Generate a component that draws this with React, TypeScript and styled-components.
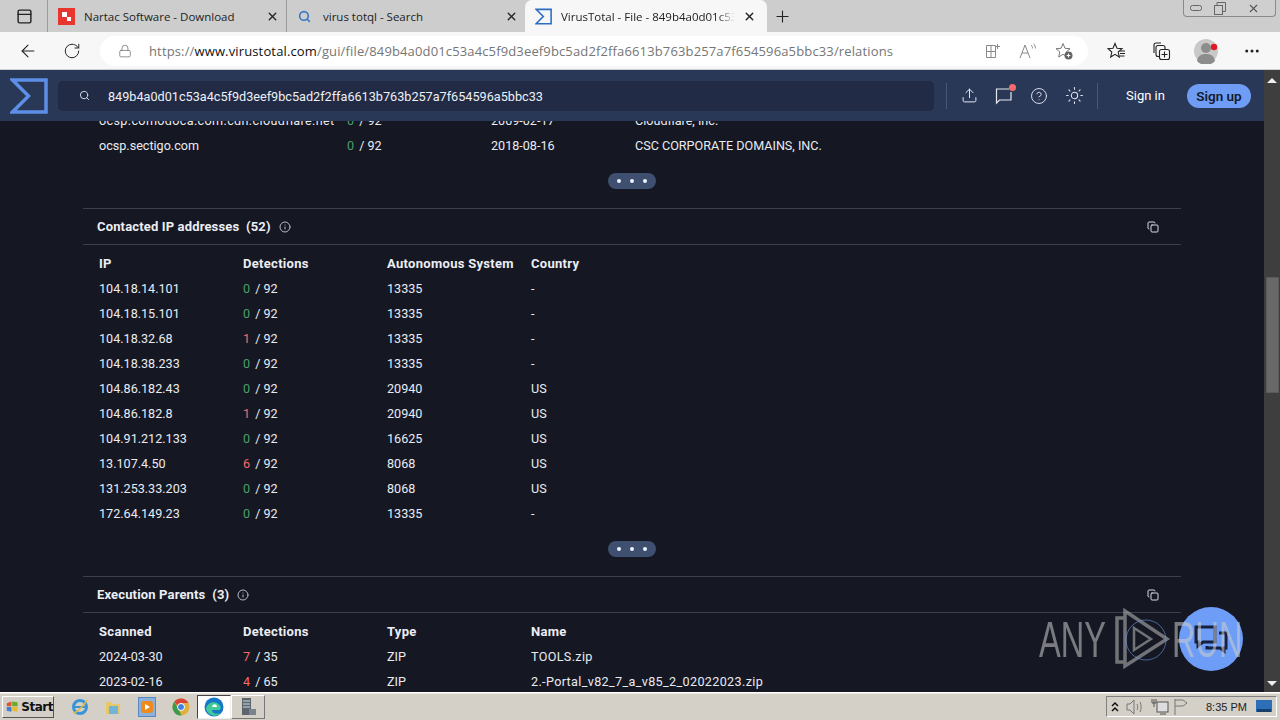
import React from "react";
import styled, { createGlobalStyle } from "styled-components";
import {
  ArrowLeft, RotateCw, Lock, X, Plus, Search, MoreHorizontal, Upload, HelpCircle, Sun, Info, Copy,
  PanelTop,
} from "lucide-react";

const Global = createGlobalStyle`
  html, body { margin: 0; padding: 0; width: 1280px; height: 720px; overflow: hidden; }
  * { box-sizing: border-box; }
  body { font-family: Roboto, "Noto Sans", sans-serif; background: #151823; }
`;

const Frame = styled.div`
  position: relative; width: 1280px; height: 720px; display: flex; flex-direction: column; overflow: hidden;
`;

/* browser chrome */
const TabBar = styled.div`
  height: 32px; flex: none; display: flex; align-items: stretch; background: #cdcdcd; color: #222;
`;
const WindowIcon = styled.div`
  width: 47px; display: flex; align-items: center; justify-content: center; padding-left: 1px; color: #222;
`;
const Tab = styled.div<{ $active?: boolean; $width: number }>`
  width: ${(p) => p.$width}px; display: flex; align-items: center; padding: 0 ${(p) => (p.$active ? 11 : 7)}px 0 10px;
  font: 11.5px "Open Sans", sans-serif; white-space: nowrap;
  background: ${(p) => (p.$active ? "#f7f7f7" : "transparent")};
  border-radius: ${(p) => (p.$active ? "7px 7px 0 0" : "0")};
  border-left: ${(p) => (p.$active ? "0" : "1px solid #9b9b9b")};
`;
const TabIcon = styled.span<{ $w: number }>`
  width: ${(p) => p.$w}px; flex: none; display: flex; align-items: center;
`;
const TabTitle = styled.span<{ $fade?: boolean }>`
  flex: 1; overflow: hidden; min-width: 0;
  ${(p) => p.$fade && "mask-image: linear-gradient(to right, #000 90%, transparent);"}
`;
const NewTab = styled.div`
  width: 30px; display: flex; align-items: center; justify-content: center; color: #222;
`;
const WindowButtons = styled.div`
  margin-left: auto; margin-right: 4px; width: 93px; height: 17px; display: flex;
  border: 1px solid #8a8a8a; border-top: 0; border-radius: 0 0 4px 4px; background: #cfcfcf; color: #555;
`;
const WinBtn = styled.div<{ $w: number }>`
  width: ${(p) => p.$w}px; display: flex; align-items: center; justify-content: center;
`;
const AddressRow = styled.div`
  height: 38px; flex: none; display: flex; align-items: center; background: #f7f7f7;
  border-bottom: 1px solid #d0d0d0; color: #222;
`;
const NavBtn = styled.div<{ $w: number }>`
  width: ${(p) => p.$w}px; flex: none; display: flex; align-items: center; justify-content: center;
`;
const Omnibox = styled.div`
  width: 988px; height: 30px; flex: none; background: #fff; border-radius: 15px; display: flex; align-items: center;
  padding-left: 18px; margin-left: 12px; color: #666;
`;
const Url = styled.div`
  width: 826px; margin-left: 17px; font: 13px "Open Sans", sans-serif; color: #767676; white-space: nowrap; overflow: hidden;
  letter-spacing: 0.14px;
  b { font-weight: 400; color: #111; }
`;
const OmniIcons = styled.div`
  display: flex; align-items: center; gap: 18px; color: #777; margin-left: 10px;
`;
const ToolIcons = styled.div`
  display: flex; align-items: center; margin-left: 11px;
`;
const Avatar = styled.div`
  display: flex;
`;

/* page */
const Body = styled.div`
  flex: 1; min-height: 0; display: flex;
`;
const Page = styled.div`
  flex: 1; min-width: 0; display: flex; flex-direction: column; background: #151823;
`;
const Header = styled.header`
  height: 51px; flex: none; display: flex; align-items: center; background: #2a3857; z-index: 2;
  color: #e6e9f2; padding-left: 10px;
`;
const SearchBox = styled.div`
  width: 876px; height: 30px; margin-left: 10px; border-radius: 5px; background: #212b45; display: flex; align-items: center;
  padding-left: 21px; color: #dfe3ee;
`;
const SearchText = styled.span`
  margin-left: 18px; padding-top: 1px; font-size: 12.67px; color: #eef0f6;
`;
const Divider = styled.div`
  width: 1px; height: 26px; background: #4a5878;
`;
const HeadIcons = styled.div`
  display: flex; align-items: center; gap: 15px; margin: 0 13px 0 12px;
`;
const HeadIcon = styled.span`
  position: relative; width: 20px; height: 20px; display: flex; align-items: center; justify-content: center;
`;
const RedDot = styled.span`
  position: absolute; top: -2px; right: -2px; width: 7px; height: 7px; border-radius: 50%; background: #f56a6a;
`;
const SignIn = styled.span`
  margin-left: 28px; font-size: 13px; color: #fff;
`;
const SignUp = styled.span`
  margin-left: 22px; width: 64px; height: 24px; border-radius: 12px; background: #6f9df5; color: #141a2c;
  display: flex; align-items: center; justify-content: center; font-size: 13.5px; font-weight: 600;
`;
const Viewport = styled.main`
  flex: 1; min-height: 0; overflow: hidden;
`;
const Scrolled = styled.div`
  margin-top: -13px; padding: 0 83px; width: 1264px; color: #e9ebf2;
`;
const Row = styled.div`
  display: grid; grid-template-columns: repeat(4, 144px); height: 25px; align-items: center; padding-left: 16px;
  font-size: 12.6px; white-space: nowrap;
`;
const WideRow = styled(Row)`
  grid-template-columns: 248px 144px 144px auto;
`;
const HeadRow = styled(Row)`
  font-size: 13px; font-weight: 700; letter-spacing: 0.3px; color: #eceef4;
`;
const LongName = styled.span`
  letter-spacing: 0.35px;
`;
const Num = styled.span<{ $bad: boolean }>`
  color: ${(p) => (p.$bad ? "#f56a6a" : "#4c9e68")};
`;
const Slash = styled.span`
  margin-left: 2px;
`;
const MoreWrap = styled.div`
  height: 50px; padding-top: 15px; display: flex; justify-content: center;
`;
const MorePill = styled.div`
  width: 48px; height: 16px; border-radius: 8px; background: #3f4f70; display: flex; align-items: center; justify-content: center; gap: 9px;
`;
const MoreDot = styled.span`
  width: 4px; height: 4px; border-radius: 50%; background: #eef2ff;
`;
const SectionHead = styled.div`
  height: 37px; border-top: 1px solid #3b3f4b; border-bottom: 1px solid #3b3f4b; display: flex; align-items: center;
  padding: 0 22px 0 14px; font-size: 13px; font-weight: 700; letter-spacing: 0.15px; color: #eceef4; white-space: pre;
`;
const SectionInfo = styled.span`
  display: flex; margin-left: 8px; color: #b8bcc8;
`;
const SectionCopy = styled.span`
  display: flex; margin-left: auto; color: #d8dbe4;
`;
const TableTop = styled.div`
  height: 6px;
`;

const Scrollbar = styled.div`
  width: 16px; flex: none; background: #3e3e3e; display: flex; flex-direction: column; align-items: center;
`;
const ScrollArrow = styled.div<{ $down?: boolean }>`
  width: 0; height: 0; flex: none; border-left: 5px solid transparent; border-right: 5px solid transparent;
  ${(p) => (p.$down ? "border-top: 5px solid #eee; margin-bottom: 6px;" : "border-bottom: 5px solid #eee; margin-top: 8px;")}
`;
const Thumb = styled.div`
  width: 13px; height: 116px; margin-top: 194px; background: #686868; border: 1px solid #5a5a5a; flex: none;
`;
const ScrollGap = styled.div`
  flex: 1;
`;

/* taskbar */
const Taskbar = styled.footer`
  height: 28px; flex: none; background: #d4d0c8; border-top: 1px solid #fff; display: flex; align-items: center; padding-left: 2px;
  box-shadow: inset 0 1px 0 #ece9e2;
`;
const StartBtn = styled.div`
  width: 52px; height: 22px; display: flex; align-items: center; gap: 3px; padding-left: 3px;
  font: bold 12px "DejaVu Sans", sans-serif; letter-spacing: -0.5px; color: #111; background: #d4d0c8;
  border: 1px solid; border-color: #fff #555 #555 #fff;
`;
const TaskIcons = styled.div`
  display: flex; align-items: center; margin-left: 9px;
`;
const TaskItem = styled.div<{ $state?: "active" | "raised" }>`
  width: 33.6px; height: 24px; flex: none; display: flex; align-items: center; justify-content: center;
  ${(p) => p.$state === "active" && "background: #fff; border: 1px solid; border-color: #444 #eee #eee #444;"}
  ${(p) => p.$state === "raised" && "border: 1px solid; border-color: #fff #777 #777 #fff;"}
`;
const Tray = styled.div`
  margin-left: auto; margin-right: 3px; width: 171px; height: 21px; display: flex; align-items: center; padding-left: 2px;
  border: 1px solid; border-color: #808080 #fff #fff #808080; color: #333;
`;
const TrayItem = styled.span<{ $w: number }>`
  width: ${(p) => p.$w}px; flex: none; display: flex; align-items: center; justify-content: center;
`;
const Clock = styled.span`
  margin-left: 15px; width: 50px; font: 11px "Liberation Sans", sans-serif; color: #222; white-space: nowrap;
`;

/* overlays */
const ChatBubble = styled.div`
  position: absolute; left: 1179px; top: 607px; width: 64px; height: 64px; border-radius: 50%; background: #6d9df6;
  display: flex; align-items: center; justify-content: center;
`;
const Watermark = styled.div`
  position: absolute; left: 1039px; top: 608px; width: 200px; height: 64px; display: flex; align-items: center; pointer-events: none;
`;
const MarkText = styled.span<{ $w: number }>`
  display: inline-block; width: ${(p) => p.$w}px; font: 50px/64px "Liberation Sans", sans-serif; color: rgba(205,205,205,.55);
  transform: scaleX(.65); transform-origin: left center; white-space: nowrap;
`;

const Sigma = ({ size, color, sw }: { size: number; color: string; sw: number }) => (
  <svg width={size} height={size} viewBox="0 0 38 36" fill="none">
    <path d="M2.500 2H36V34H2.500L18.500 18Z" stroke={color} strokeWidth={sw} strokeLinejoin="miter" />
  </svg>
);
const NartacIcon = () => (
  <svg width="17" height="17" viewBox="0 0 17 17"><rect width="17" height="17" fill="#e8352e" /><rect x="4" y="4" width="5" height="5" fill="#fff" /><rect x="9" y="9" width="4" height="4" fill="#fff" /></svg>
);
const SplitScreen = () => (
  <svg width="16" height="16" viewBox="0 0 16 16" fill="none" stroke="#888" strokeWidth="1"><path d="M1.500 2.500h9v12h-9zM1.500 8.500h9M6 2.500v12M12.500 1v5M10 3.500h5" /></svg>
);
const ReadAloud = () => (
  <svg width="18" height="16" viewBox="0 0 18 16" fill="none" stroke="#888" strokeWidth="1"><path d="M1 15 6 2l5 13M3 10h6M12 2c1 1 1.600 2 1.600 3.400M14.500.8c1.300 1.300 2 2.800 2 4.600" /></svg>
);
const FavAdd = () => (
  <svg width="18" height="18" viewBox="0 0 18 18" fill="none"><path d="M8 1.500 10 6.300l5 .4-3.800 3.300 1.100 5L8 12.300 3.700 15l1.100-5L1 6.700l5-.4Z" stroke="#777" /><circle cx="13.500" cy="13.500" r="4" fill="#666" /><path d="M13.500 11.700v3.600M11.700 13.500h3.600" stroke="#fff" /></svg>
);
const Favs = () => (
  <svg width="20" height="18" viewBox="0 0 20 18" fill="none" stroke="#222" strokeWidth="1.100"><path d="M8 1.500 10 6.300l5 .4-3.800 3.300 1.100 5L8 12.300 3.700 15l1.100-5L1 6.700l5-.4Z" /><path d="M13 9h5M13 11.500h5M12.500 14h5" /></svg>
);
const Collections = () => (
  <svg width="20" height="20" viewBox="0 0 20 20" fill="none" stroke="#222" strokeWidth="1.100"><path d="M3 12V4a2 2 0 0 1 2-2h5" /><rect x="5" y="4.500" width="9" height="11" rx="2" /><rect x="8.500" y="8.500" width="10" height="10" rx="2" fill="#f7f7f7" /><path d="M13.500 10.500v6M10.500 13.500h6" /></svg>
);
const AvatarArt = () => (
  <svg width="26" height="26" viewBox="0 0 26 26"><circle cx="12" cy="13" r="12" fill="#c9c9c9" /><circle cx="12" cy="10" r="5" fill="#8d8d8d" /><path d="M3 23c1-6 5-7 9-7s8 1 9 7a12 12 0 0 1-18 0Z" fill="#8d8d8d" /><circle cx="20" cy="9" r="3.200" fill="#e01b24" /></svg>
);
const Feedback = () => (
  <svg width="18" height="18" viewBox="0 0 18 18" fill="none" stroke="#e6e9f2" strokeWidth="1.200"><path d="M14 2H1.500v14L4.500 13H16V5" /></svg>
);
const ChatIcon = () => (
  <svg width="36" height="30" viewBox="0 0 36 30" fill="none" stroke="#16213d" strokeWidth="3"><path d="M3 3h19v15H10l-5 4v-4H3Z" /><path d="M26 9h7v15h-2v3l-4-3H14v-2" /></svg>
);
const PlayMark = () => (
  <svg width="62" height="64" viewBox="0 0 62 64" fill="none" stroke="rgba(205,205,205,.5)" strokeWidth="3.500" style={{ flex: "none" }}>
    <path d="M14 10H7v44h7M15 3v55l42-27Z" />
    <path d="M24 20v22l17-11Z" strokeWidth="2.500" />
    <circle cx="36" cy="32" r="20" stroke="rgba(110,150,230,.6)" strokeWidth="1" />
  </svg>
);
const IEIcon = () => (
  <svg width="18" height="18" viewBox="0 0 18 18" fill="none"><circle cx="9" cy="9" r="6.500" stroke="#3a94d8" strokeWidth="3" /><path d="M3 9h12" stroke="#3a94d8" strokeWidth="2" /><path d="M2 15C6 15 14 6 16 2" stroke="#e8b93a" strokeWidth="1.500" /></svg>
);
const FolderIcon = () => (
  <svg width="18" height="18" viewBox="0 0 18 18"><path d="M2 4h5l1 2h8v10H2Z" fill="#e9c765" /><path d="M5 8h9v8H5Z" fill="#6fb4d8" /></svg>
);
const MediaIcon = () => (
  <svg width="18" height="20" viewBox="0 0 18 20"><rect x=".5" y=".5" width="17" height="19" fill="#8bb1dc" stroke="#5c88c0" /><rect x="3" y="4" width="12" height="12" rx="3" fill="#ef8a1c" /><path d="M7 7v6l5-3Z" fill="#fff" /></svg>
);
const ChromeIcon = () => (
  <svg width="18" height="18" viewBox="0 0 18 18"><circle cx="9" cy="9" r="8.500" fill="#e0b03a" /><path d="M9 .5A8.500 8.500 0 0 1 16.400 5H9a4 4 0 0 0-3.600 2.500L2.300 3.800A8.500 8.500 0 0 1 9 .5Z" fill="#d9453a" /><path d="M2.300 3.800 6 10.500l3.500 7A8.500 8.500 0 0 1 2.300 3.800Z" fill="#3c9a4e" /><circle cx="9" cy="9" r="3.500" fill="#3f7fe0" stroke="#fff" /></svg>
);
const EdgeIcon = () => (
  <svg width="20" height="20" viewBox="0 0 20 20"><circle cx="10" cy="10" r="9.500" fill="#1477c8" /><path d="M2 12C3 6 9 4 13 6s5 6 2 7H8c0 3 4 5 9 3-4 5-13 3-15-4Z" fill="#42c99a" /><path d="M8 10h5c0-3-4-4-5 0Z" fill="#fff" /></svg>
);
const ServerIcon = () => (
  <svg width="18" height="20" viewBox="0 0 18 20"><rect x="3" y="1" width="9" height="17" fill="#5c6470" /><path d="M4 4h7M4 7h7M4 10h7" stroke="#cdd" /><rect x="10" y="12" width="7" height="6" fill="#7a828c" /></svg>
);
const TrayChevron = () => (
  <svg width="10" height="12" viewBox="0 0 10 12" fill="none" stroke="#111" strokeWidth="1.500"><path d="M2 5l3-3 3 3M2 10l3-3 3 3" /></svg>
);
const Speaker = () => (
  <svg width="18" height="16" viewBox="0 0 18 16" fill="none" stroke="#777"><path d="M1 5h3l4-4v14l-4-4H1ZM11 5c1 2 1 4 0 6M14 3c1.500 3 1.500 7 0 10" /></svg>
);
const NetIcon = () => (
  <svg width="18" height="18" viewBox="0 0 18 18" fill="none" stroke="#555"><rect x="6" y="4" width="11" height="10" fill="#ddd" /><path d="M3 1v8M1 1v4h4V1M9 16h6" /></svg>
);
const FlagIcon = () => (
  <svg width="16" height="18" viewBox="0 0 16 18" fill="none" stroke="#777"><path d="M2 1v16M2 2h8l4 3-4 3H2" /></svg>
);
const DesktopIcon = () => (
  <svg width="16" height="14" viewBox="0 0 16 14"><rect width="16" height="12" fill="#2a6fb8" /><rect x="1" y="9" width="14" height="3" fill="#16406f" /></svg>
);
const WinFlag = () => (
  <svg width="16" height="16" viewBox="0 0 16 16"><path d="M1 3 7 1v6H1Z" fill="#e0562c" /><path d="M8 1l7 1v5H8Z" fill="#6ea92e" /><path d="M1 8h6v6l-6-1Z" fill="#3f7fd4" /><path d="M8 8h7v6l-7-1Z" fill="#efb92c" /></svg>
);

const ips: [string, number, string, string][] = [
  ["104.18.14.101", 0, "13335", "-"],
  ["104.18.15.101", 0, "13335", "-"],
  ["104.18.32.68", 1, "13335", "-"],
  ["104.18.38.233", 0, "13335", "-"],
  ["104.86.182.43", 0, "20940", "US"],
  ["104.86.182.8", 1, "20940", "US"],
  ["104.91.212.133", 0, "16625", "US"],
  ["13.107.4.50", 6, "8068", "US"],
  ["131.253.33.203", 0, "8068", "US"],
  ["172.64.149.23", 0, "13335", "-"],
];
const parents: [string, number, number, string, string][] = [
  ["2024-03-30", 7, 35, "ZIP", "TOOLS.zip"],
  ["2023-02-16", 4, 65, "ZIP", "2.-Portal_v82_7_a_v85_2_02022023.zip"],
];

const Det = ({ n, of }: { n: number; of: number }) => (
  <span>
    <Num $bad={n > 0}>{n}</Num><Slash> / {of}</Slash>
  </span>
);
const More = () => (
  <MoreWrap>
    <MorePill>
      <MoreDot />
      <MoreDot />
      <MoreDot />
    </MorePill>
  </MoreWrap>
);
const Section = ({ title, count }: { title: string; count: number }) => (
  <SectionHead>
    {title}  ({count})
    <SectionInfo><Info size={12} /></SectionInfo>
    <SectionCopy><Copy size={12} /></SectionCopy>
  </SectionHead>
);

export default function App() {
  return (
    <Frame>
      <Global />
      <TabBar>
        <WindowIcon><PanelTop size={17} /></WindowIcon>
        <Tab $width={239}>
          <TabIcon $w={26}><NartacIcon /></TabIcon>
          <TabTitle>Nartac Software - Download</TabTitle>
          <X size={13} strokeWidth={2.5} />
        </Tab>
        <Tab $width={239}>
          <TabIcon $w={26}><Search size={13} color="#3b78c4" strokeWidth={3} style={{ marginLeft: 1 }} /></TabIcon>
          <TabTitle>virus totql - Search</TabTitle>
          <X size={13} strokeWidth={2.5} />
        </Tab>
        <Tab $active $width={242}>
          <TabIcon $w={26}><Sigma size={17} color="#2b6cc4" sw={3.5} /></TabIcon>
          <TabTitle $fade>VirusTotal - File - 849b4a0d01c53a4c5f9d3eef</TabTitle>
          <X size={13} strokeWidth={2.5} style={{ marginLeft: 8 }} />
        </Tab>
        <NewTab><Plus size={19} strokeWidth={1.4} /></NewTab>
        <WindowButtons>
          <WinBtn $w={24}><svg width="12" height="6"><rect x=".5" y=".5" width="11" height="5" rx="2" fill="none" stroke="#666" /></svg></WinBtn>
          <WinBtn $w={24}><svg width="12" height="13" fill="none" stroke="#666"><rect x=".5" y="3.500" width="8" height="9" /><path d="M3 3V.5h8.500v9H9" /></svg></WinBtn>
          <WinBtn $w={43}><X size={13} /></WinBtn>
        </WindowButtons>
      </TabBar>
      <AddressRow>
        <NavBtn $w={56}><ArrowLeft size={20} strokeWidth={1.3} /></NavBtn>
        <NavBtn $w={32}><RotateCw size={18} strokeWidth={1.3} /></NavBtn>
        <Omnibox>
          <Lock size={14} strokeWidth={1.2} />
          <Url>https://<b>www.virustotal.com</b>/gui/file/849b4a0d01c53a4c5f9d3eef9bc5ad2f2ffa6613b763b257a7f654596a5bbc33/relations</Url>
          <OmniIcons><SplitScreen /><ReadAloud /><FavAdd /></OmniIcons>
        </Omnibox>
        <ToolIcons>
          <NavBtn $w={36}><Favs /></NavBtn>
          <NavBtn $w={51}><Collections /></NavBtn>
          <NavBtn $w={41}><Avatar><AvatarArt /></Avatar></NavBtn>
          <NavBtn $w={50}><MoreHorizontal size={18} /></NavBtn>
        </ToolIcons>
      </AddressRow>
      <Body>
        <Page>
          <Header>
            <Sigma size={38} color="#5d8fe6" sw={3.5} />
            <SearchBox>
              <Search size={11} />
              <SearchText>849b4a0d01c53a4c5f9d3eef9bc5ad2f2ffa6613b763b257a7f654596a5bbc33</SearchText>
            </SearchBox>
            <Divider style={{ marginLeft: 12 }} />
            <HeadIcons>
              <HeadIcon><Upload size={17} strokeWidth={1.4} /></HeadIcon>
              <HeadIcon><Feedback /><RedDot /></HeadIcon>
              <HeadIcon><HelpCircle size={18} strokeWidth={1.2} /></HeadIcon>
              <HeadIcon><Sun size={19} strokeWidth={1.3} /></HeadIcon>
            </HeadIcons>
            <Divider />
            <SignIn>Sign in</SignIn>
            <SignUp>Sign up</SignUp>
          </Header>
          <Viewport>
            <Scrolled>
              <WideRow>
                <LongName>ocsp.comodoca.com.cdn.cloudflare.net</LongName>
                <Det n={0} of={92} />
                <span>2009-02-17</span>
                <span>Cloudflare, Inc.</span>
              </WideRow>
              <WideRow>
                <span>ocsp.sectigo.com</span>
                <Det n={0} of={92} />
                <span>2018-08-16</span>
                <span>CSC CORPORATE DOMAINS, INC.</span>
              </WideRow>
              <More />
              <Section title="Contacted IP addresses" count={52} />
              <TableTop />
              <HeadRow><span>IP</span><span>Detections</span><span>Autonomous System</span><span>Country</span></HeadRow>
              {ips.map(([ip, n, as, c]) => (
                <Row key={ip}><span>{ip}</span><Det n={n} of={92} /><span>{as}</span><span>{c}</span></Row>
              ))}
              <More />
              <Section title="Execution Parents" count={3} />
              <TableTop />
              <HeadRow><span>Scanned</span><span>Detections</span><span>Type</span><span>Name</span></HeadRow>
              {parents.map(([d, n, of, t, name]) => (
                <Row key={name}><span>{d}</span><Det n={n} of={of} /><span>{t}</span><LongName>{name}</LongName></Row>
              ))}
            </Scrolled>
          </Viewport>
        </Page>
        <Scrollbar>
          <ScrollArrow />
          <Thumb />
          <ScrollGap />
          <ScrollArrow $down />
        </Scrollbar>
      </Body>
      <Taskbar>
        <StartBtn><WinFlag />Start</StartBtn>
        <TaskIcons>
          <TaskItem><IEIcon /></TaskItem>
          <TaskItem><FolderIcon /></TaskItem>
          <TaskItem><MediaIcon /></TaskItem>
          <TaskItem><ChromeIcon /></TaskItem>
          <TaskItem $state="active"><EdgeIcon /></TaskItem>
          <TaskItem $state="raised"><ServerIcon /></TaskItem>
        </TaskIcons>
        <Tray>
          <TrayItem $w={12}><TrayChevron /></TrayItem>
          <TrayItem $w={28}><Speaker /></TrayItem>
          <TrayItem $w={22}><NetIcon /></TrayItem>
          <TrayItem $w={20}><FlagIcon /></TrayItem>
          <Clock>8:35 PM</Clock>
          <TrayItem $w={16}><DesktopIcon /></TrayItem>
        </Tray>
      </Taskbar>
      <ChatBubble><ChatIcon /></ChatBubble>
      <Watermark>
        <MarkText $w={71}>ANY</MarkText>
        <PlayMark />
        <MarkText $w={60}>RUN</MarkText>
      </Watermark>
    </Frame>
  );
}
